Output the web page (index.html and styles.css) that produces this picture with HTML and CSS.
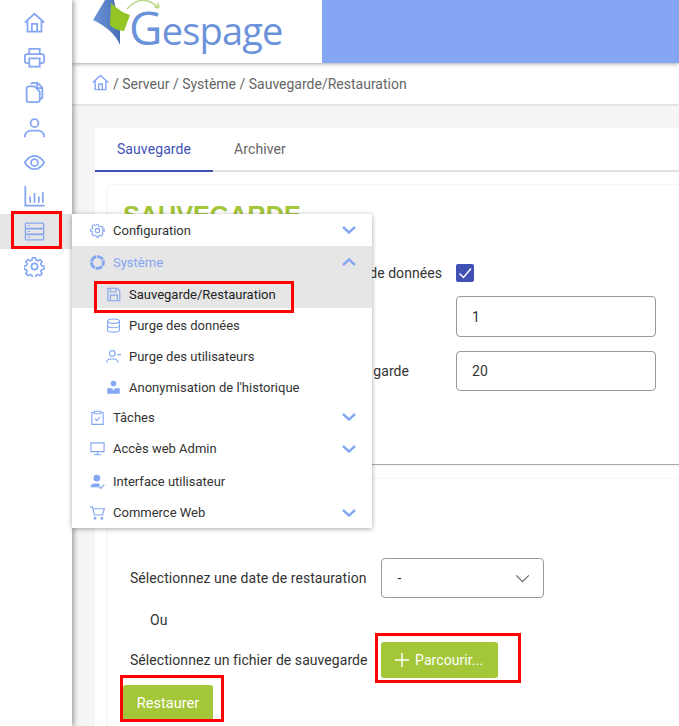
FILE: index.html
```html
<!DOCTYPE html>
<html lang="fr">
<head>
<meta charset="utf-8">
<title>Gespage</title>
<link rel="stylesheet" href="styles.css">
</head>
<body>
<div class="app">
  <nav class="rail">
    <a class="rail-item"><svg class="ri" viewBox="0 0 24 24"><path d="M1 12 12 2l11 10M4 9.500V22.500h16V9.500M9 22.500v-9h6v9"/></svg></a>
    <a class="rail-item"><svg class="ri" viewBox="0 0 24 24"><path d="M6 8V2h12v6M6 18.500H3.500A2.500 2.500 0 0 1 1 16v-5.500A2.500 2.500 0 0 1 3.500 8h17a2.500 2.500 0 0 1 2.500 2.500V16a2.500 2.500 0 0 1-2.500 2.500H18M6 13h12v9.500H6z"/></svg></a>
    <a class="rail-item"><svg class="ri" viewBox="0 0 24 24"><path d="M8 2.500A2 2 0 0 1 10 1h5.500L21 6.500V17a2 2 0 0 1-2 2h-1M15 1v6h6M8 5H5.500A2.500 2.500 0 0 0 3 7.500v13A2.500 2.500 0 0 0 5.500 23h10a2.500 2.500 0 0 0 2.500-2.500V11l-6-6H8z"/></svg></a>
    <a class="rail-item"><svg class="ri" viewBox="0 0 24 24"><circle cx="12" cy="7" r="4.500"/><path d="M1 23v-1a7 7 0 0 1 7-6.500h8a7 7 0 0 1 7 6.500v1"/></svg></a>
    <a class="rail-item"><svg class="ri" viewBox="0 0 24 24"><path d="M1 12s4-7.500 11-7.500S23 12 23 12s-4 7.500-11 7.500S1 12 1 12z"/><circle cx="12" cy="12" r="4"/></svg></a>
    <a class="rail-item"><svg class="ri" viewBox="0 0 24 24"><path d="M1.500 0v22.500h22M7 12v7M12 8v11M17 12v7M21.500 7v12"/></svg></a>
    <a class="rail-item rail-active"><svg class="ri ri-stack" viewBox="0 0 24 24"><rect x="1.500" y="2.500" width="21" height="6" rx="1"/><rect x="1.500" y="9" width="21" height="6" rx="1"/><rect x="1.500" y="15.500" width="21" height="6" rx="1"/><path class="thin" d="M4 5.500h3M4 12h3M4 18.500h3"/></svg></a>
    <a class="rail-item"><svg class="ri" viewBox="0 0 24 24"><circle cx="12" cy="12" r="3.500"/><path d="M10 1.500h4l.6 3 2.300 1 2.600-1.700 2.800 2.800-1.700 2.600 1 2.300 3 .6v4l-3 .6-1 2.300 1.700 2.600-2.800 2.800-2.600-1.700-2.300 1-.6 3h-4l-.6-3-2.300-1-2.600 1.700-2.800-2.800 1.700-2.600-1-2.300-3-.6v-4l3-.6 1-2.300L1.700 6.600l2.800-2.800 2.600 1.700 2.300-1z" transform="translate(.6 .6) scale(.9)"/></svg></a>
  </nav>

  <main class="main">
    <header class="topbar">
      <div class="logo">
        <svg class="logo-mark" viewBox="0 0 70 48">
          <defs><linearGradient id="lmg" x1="0" y1="0" x2="1" y2="0"><stop offset="0" stop-color="#6f96da"/><stop offset="1" stop-color="#476db5"/></linearGradient></defs>
          <path fill="url(#lmg)" d="M1 20 13 0h9l6 30v15Q22 30 1 20z"/>
          <path class="lm-green" d="M19 3Q28 12 38 15L32 31Q22 30 18 25z"/>
          <path class="lm-arrow" d="M35 9Q50-8 67 8M67 8l-5-1M67 8l-1-5"/>
        </svg>
        <span class="logo-text"><span class="logo-g">G</span>espage</span>
      </div>
      <div class="topfill"></div>
    </header>
    <div class="crumbs">
      <svg class="crumb-home" viewBox="0 0 24 24"><path d="M1 12 12 2l11 10M4.500 10v12h15V10M9.500 22v-8h5v8"/></svg>
      <span>/ Serveur / Système / Sauvegarde/Restauration</span>
    </div>
    <div class="content">
      <section class="sheet">
        <div class="tabs">
          <span class="tab tab-on">Sauvegarde</span>
          <span class="tab tab-off">Archiver</span>
        </div>
        <div class="card card-save">
          <h1 class="card-title">SAUVEGARDE</h1>
          <div class="row row-check"><span class="lab">de données</span><span class="check"><svg viewBox="0 0 18 18"><path d="M3.500 9.500 7.500 13.500 15 4.500"/></svg></span></div>
          <div class="row row-one"><span class="lab"></span><span class="field">1</span></div>
          <div class="row row-two"><span class="lab">garde</span><span class="field">20</span></div>
        </div>
        <div class="card card-rest">
          <div class="pick"><span class="pick-lab">Sélectionnez une date de restauration</span><span class="select">-<svg viewBox="0 0 16 10"><path d="M1 1.500 8 8.500l7-7"/></svg></span></div>
          <div class="or">Ou</div>
          <div class="pick pick-file"><span class="pick-lab">Sélectionnez un fichier de sauvegarde</span><span class="btn btn-browse"><svg viewBox="0 0 14 14"><path d="M7 0v14M0 7h14"/></svg>Parcourir...</span></div>
          <span class="btn btn-restore">Restaurer</span>
        </div>
      </section>
    </div>
  </main>

  <div class="hl hl-rail"></div>
  <div class="hl hl-save"></div>
  <div class="hl hl-browse"></div>
  <div class="hl hl-restore"></div>

  <aside class="menu">
    <div class="mi">
      <svg class="mic" viewBox="0 0 24 24"><circle cx="12" cy="12" r="3.500"/><path d="M10 2h4l.6 2.800 2.300 1 2.500-1.500 2.800 2.800-1.500 2.500 1 2.300L24 10v4l-2.800.6-1 2.300 1.500 2.500-2.800 2.800-2.500-1.500-2.300 1L14 24h-4l-.6-2.800-2.300-1-2.500 1.500-2.800-2.800 1.500-2.500-1-2.300L0 14v-4l2.800-.6 1-2.300-1.500-2.500 2.800-2.800 2.500 1.500 2.300-1z" transform="translate(1.200 1) scale(.9)"/></svg>
      <span class="mt">Configuration</span>
      <svg class="chev" viewBox="0 0 14 8"><path d="M1 1l6 5.500L13 1"/></svg>
    </div>
    <div class="mi mi-open">
      <svg class="mic mic-fat" viewBox="0 0 24 24"><circle cx="12" cy="12" r="9.500" stroke-dasharray="10.500 1.440" stroke-dashoffset="5"/></svg>
      <span class="mt">Système</span>
      <svg class="chev" viewBox="0 0 14 8"><path d="M1 7l6-5.500L13 7"/></svg>
    </div>
    <div class="sub sub-on">
      <svg class="mic" viewBox="0 0 24 24"><path d="M3 2h15l4 4v16H3zM7 2v6h9V2M7 22v-9h11v9"/></svg>
      <span class="mt">Sauvegarde/Restauration</span>
    </div>
    <div class="sub">
      <svg class="mic" viewBox="0 0 24 24"><ellipse cx="12" cy="5" rx="9.500" ry="3.500"/><path d="M2.500 5v14c0 2 4.300 3.500 9.500 3.500s9.500-1.500 9.500-3.500V5M2.500 12c0 2 4.300 3.500 9.500 3.500s9.500-1.500 9.500-3.500"/></svg>
      <span class="mt">Purge des données</span>
    </div>
    <div class="sub">
      <svg class="mic" viewBox="0 0 24 24"><circle cx="10" cy="7" r="4.500"/><path d="M1 22v-1a6 6 0 0 1 6-5h6a6 6 0 0 1 6 5v1M18 9h6"/></svg>
      <span class="mt">Purge des utilisateurs</span>
    </div>
    <div class="sub">
      <svg class="mic mic-solid" viewBox="0 0 24 24"><circle cx="12" cy="5.500" r="4.500"/><path d="M2 13h8l2 4 2-4h8v9H2z"/></svg>
      <span class="mt">Anonymisation de l'historique</span>
    </div>
    <div class="mi">
      <svg class="mic" viewBox="0 0 24 24"><path d="M7 4H3v19h18V4h-4M7 2h10v4H7zM8 14l3 3 5-6"/></svg>
      <span class="mt">Tâches</span>
      <svg class="chev" viewBox="0 0 14 8"><path d="M1 1l6 5.500L13 1"/></svg>
    </div>
    <div class="mi">
      <svg class="mic" viewBox="0 0 24 24"><path d="M1.500 3h21v14h-21zM12 17v5M6 22h12"/></svg>
      <span class="mt">Accès web Admin</span>
      <svg class="chev" viewBox="0 0 14 8"><path d="M1 1l6 5.500L13 1"/></svg>
    </div>
    <div class="mi mi-low">
      <svg class="mic mic-solid" viewBox="0 0 24 24"><circle cx="11" cy="6.500" r="5.500"/><path d="M1 21c0-4 3-6 6-6h7l2 2-3 4z"/><path class="tick" d="M14 20l3 3 6-6"/></svg>
      <span class="mt">Interface utilisateur</span>
    </div>
    <div class="mi">
      <svg class="mic" viewBox="0 0 24 24"><path d="M0 3h4l3 13h13l3-10H5"/><circle cx="8" cy="21" r="1.500"/><circle cx="19" cy="21" r="1.500"/></svg>
      <span class="mt">Commerce Web</span>
      <svg class="chev" viewBox="0 0 14 8"><path d="M1 1l6 5.500L13 1"/></svg>
    </div>
  </aside>
</div>
</body>
</html>
```

FILE: styles.css
```css
* { box-sizing: border-box; }
html, body { margin: 0; padding: 0; height: 100%; overflow: hidden; }
body { font-family: Roboto, "Liberation Sans", Arial, sans-serif; color: #333; background: #f5f5f5; letter-spacing: .06px; }

.app { position: relative; display: flex; width: 679px; height: 726px; overflow: hidden; }

/* left rail */
.rail { position: relative; z-index: 2; flex: 0 0 72px; background: #fff; box-shadow: 2px 0 5px rgba(0,0,0,.35); padding-top: 5px; display: flex; flex-direction: column; }
.rail-item { flex: 0 0 34.900px; display: flex; align-items: center; justify-content: center; padding-right: 3px; }
.rail-active { background: #e5e5e5; }
.ri { width: 21px; height: 21px; fill: none; stroke: #84a6f3; stroke-width: 2; }
.ri-stack { stroke-width: 1.500; }
.ri .thin { stroke-width: 1; }

.main { flex: 1; min-width: 0; display: flex; flex-direction: column; }

/* top bar */
.topbar { flex: 0 0 63px; display: flex; background: #fff; box-shadow: 0 1px 4px rgba(0,0,0,.35); position: relative; z-index: 1; }
.logo { flex: 0 0 250px; position: relative; }
.logo-mark { position: absolute; left: 20px; top: 0; width: 70px; height: 48px; overflow: visible; }
.lm-green { fill: #93c524; }
.lm-arrow { fill: none; stroke: #bcd889; stroke-width: 1.500; }
.logo-text { position: absolute; left: 57px; top: 3px; font: 500 38px/48px "Open Sans", sans-serif; color: #6c92da; letter-spacing: -.8px; white-space: nowrap; }
.logo-g { font-size: 46px; }
.topfill { flex: 1; background: #84a6f3; }

/* breadcrumb */
.crumbs { flex: 0 0 41px; background: #fff; display: flex; align-items: center; padding-left: 20px; gap: 4px; font-size: 14px; color: #666; letter-spacing: 0; box-shadow: 0 1px 2px rgba(0,0,0,.12); }
.crumb-home { width: 17px; height: 17px; fill: none; stroke: #84a6f3; stroke-width: 2; margin-top: -3px; }

/* content */
.content { flex: 1; padding: 24px 0 0 23px; }
.sheet { background: #fff; height: 100%; padding-left: 13px; position: relative; }
.tabs { height: 44px; margin-left: -13px; display: flex; border-bottom: 2px solid #e2e2e2; font-size: 14px; letter-spacing: .1px; }
.tab { line-height: 43px; color: #666; height: 44px; }
.tab-on { width: 118px; text-align: center; color: #3f51b5; border-bottom: 2px solid #3f51b5; }
.tab-off { padding-left: 21px; }

.card { box-shadow: 0 0 3px rgba(0,0,0,.1); border-radius: 4px 0 0 0; }
.card-save { margin-top: 13px; height: 280px; padding-top: 14px; border-bottom: 1px solid #aaa; }
.card-title { margin: 0 0 0 15px; font: bold 25.200px/32px "Liberation Sans", Arial, sans-serif; color: #a4c639; letter-spacing: 0; }
.row { width: 548px; display: flex; align-items: center; font-size: 14px; }
.lab { flex: 0 0 348px; text-align: right; padding-right: 14px; color: #333; white-space: nowrap; }
.row-check { margin-top: 27px; height: 30px; }
.row-one { margin-top: 8px; height: 41px; }
.row-two { margin-top: 14px; height: 40px; }
.row-two .lab { padding-right: 47px; }
.field { flex: 0 0 200px; height: 100%; border: 1px solid #999; border-radius: 4px; display: flex; align-items: center; padding-left: 15px; color: #333; background: #fff; }
.check { width: 18px; height: 18px; background: #3f51b5; border-radius: 2px; display: flex; }
.check svg { width: 18px; height: 18px; fill: none; stroke: #fff; stroke-width: 1.500; }

.card-rest { margin-top: 14px; padding: 79px 0 0 22px; height: 260px; position: relative; }
.pick { display: flex; align-items: center; font-size: 14px; color: #333; gap: 15px; }
.pick-file { gap: 13px; }
.select { width: 163px; height: 40px; border: 1px solid #999; border-radius: 4px; display: flex; align-items: center; justify-content: space-between; padding: 0 13px 0 15px; }
.select svg { width: 15px; height: 9px; fill: none; stroke: #666; stroke-width: 1.300; }
.or { font-size: 14px; margin: 13px 0 13px 20px; line-height: 18px; }
.btn { background: #a4c639; color: #fff; font-size: 14px; border-radius: 3px; display: inline-flex; align-items: center; justify-content: center; }
.btn-browse { width: 117px; height: 36px; gap: 6px; }
.btn-browse svg { width: 14px; height: 14px; fill: none; stroke: #fff; stroke-width: 1.500; }
.btn-restore { position: absolute; left: 15px; top: 206px; width: 90px; height: 36px; font-size: 14.500px; }

/* red annotation boxes */
.hl { position: absolute; z-index: 6; border: 3px solid #f00; pointer-events: none; }
.hl-rail { left: 11px; top: 211px; width: 51px; height: 38px; }
.hl-save { left: 94px; top: 281px; width: 200px; height: 32px; z-index: 8; }
.hl-browse { left: 375px; top: 633px; width: 146px; height: 50px; }
.hl-restore { left: 120px; top: 675px; width: 104px; height: 47px; }

/* popup menu */
.menu { position: absolute; z-index: 7; left: 72px; top: 214px; width: 300px; height: 314px; background: #fff; box-shadow: 0 1px 5px rgba(0,0,0,.35); font-size: 13px; color: #333; letter-spacing: 0; display: flex; flex-direction: column; }
.mi { height: 32px; display: flex; align-items: center; padding: 1px 16px 0 18px; }
.mi-low { padding-top: 3px; }
.mi-open { background: #e6e6e6; color: #84a6f3; }
.sub { height: 31px; display: flex; align-items: center; padding: 4px 0 0 34px; }
.sub-on { background: #e6e6e6; color: #222; padding-top: 3px; }
.mic { flex: 0 0 15px; width: 15px; height: 15px; fill: none; stroke: #84a6f3; stroke-width: 1.800; margin-right: 8px; }
.mic-fat { stroke-width: 4.500; }
.mic-solid { fill: #84a6f3; stroke: none; }
.mic .tick { fill: none; stroke: #84a6f3; stroke-width: 2; }
.mt { flex: 1; white-space: nowrap; }
.chev { width: 14px; height: 8px; fill: none; stroke: #84a6f3; stroke-width: 2.400; }
```
